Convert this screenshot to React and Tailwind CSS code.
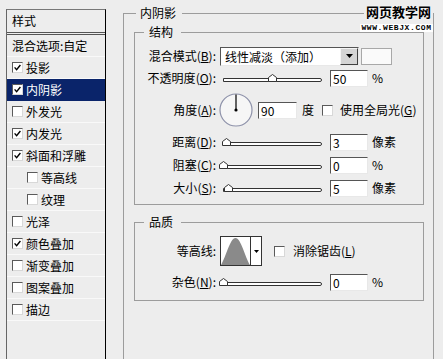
import React from "react";

const items = [
  { label: "投影", checked: true },
  { label: "内阴影", checked: true, active: true },
  { label: "外发光" },
  { label: "内发光", checked: true },
  { label: "斜面和浮雕", checked: true },
  { label: "等高线", indent: true },
  { label: "纹理", indent: true },
  { label: "光泽" },
  { label: "颜色叠加", checked: true },
  { label: "渐变叠加" },
  { label: "图案叠加" },
  { label: "描边" },
];

function Check({ checked }) {
  return (
    <span className="w-[11px] h-[11px] shrink-0 flex items-center justify-center bg-white border border-t-[#5a5a5a] border-l-[#5a5a5a] border-b-[#d8d8d8] border-r-[#d8d8d8]">
      {checked && (
        <svg width="7" height="7" viewBox="0 0 7 7">
          <path d="M0.6 3.4 L2.6 5.6 L6.4 1" stroke="#000" strokeWidth="1.4" fill="none" />
        </svg>
      )}
    </span>
  );
}

function Label({ children }) {
  return <span className="w-[81px] shrink-0 text-right whitespace-nowrap">{children}</span>;
}

function Key({ k }) {
  return (
    <>
      (<span className="underline underline-offset-[1px]">{k}</span>)
    </>
  );
}

function Slider({ thumb }) {
  return (
    <div className="relative ml-[3px] w-[103px] h-[8px] flex items-end shrink-0">
      <div className="ml-[4px] w-[99px] h-[4px] bg-white border border-[#333] rounded-r-[2px]" />
      <svg className={"absolute top-0 " + thumb} width="9" height="8" viewBox="0 0 9 8">
        <path d="M0.5 7.5 V3.5 L4.5 0.5 L8.5 3.5 V7.5 Z" fill="#fff" stroke="#333" />
      </svg>
    </div>
  );
}

function Field({ value, className = "w-[38px]" }) {
  return (
    <div className={"h-[17px] shrink-0 bg-white border border-t-[#555] border-l-[#555] border-b-[#e8e8e8] border-r-[#e8e8e8] pl-[2px] leading-[15px] " + className}>
      {value}
    </div>
  );
}

function SliderRow({ label, k, thumb, value, unit }) {
  return (
    <div className="h-[22px] flex items-center">
      <Label>
        {label}
        <Key k={k} />:
      </Label>
      <Slider thumb={thumb} />
      <Field value={value} className="w-[38px] ml-[8px]" />
      <span className="ml-[4px]">{unit}</span>
    </div>
  );
}

export default function App() {
  return (
    <div className="w-[443px] h-[359px] overflow-hidden bg-[#ededed] relative flex items-start text-[12px] text-black font-['Noto_Sans_CJK_SC',sans-serif]">
      {/* left list */}
      <div className="ml-[6px] mt-[9px] w-[100px] h-[360px] shrink-0 border-l border-t border-r border-l-[#666] border-t-[#777] border-r-black">
        <div className="h-[25px] pl-[5px] flex items-center border-b-[3px] border-double border-[#555]">样式</div>
        <div className="h-[22px] pl-[5px] flex items-center border-b border-[#f9f9f9]">混合选项:自定</div>
        {items.map((it) => (
          <div
            key={it.label}
            className={
              "h-[22px] flex items-center gap-[3px] border-b " +
              (it.indent ? "pl-[20px] " : "pl-[5px] ") +
              (it.active ? "bg-[#0a246a] text-white border-[#0a246a]" : "border-[#f9f9f9]")
            }
          >
            <Check checked={it.checked} />
            <span>{it.label}</span>
          </div>
        ))}
      </div>

      {/* right panel */}
      <fieldset className="ml-[17px] mt-[5px] w-[311px] h-[370px] shrink-0 border border-[#9c9c9c]">
        <legend className="ml-[12px] pl-[4px] pr-[6px] leading-[16px]">内阴影</legend>

        <fieldset className="mt-[3px] ml-[10px] mr-[9px] border border-[#9c9c9c] pt-[5px] pb-[5px]">
          <legend className="ml-[9px] pl-[5px] pr-[8px] leading-[16px]">结构</legend>

          <div className="h-[22px] flex items-center">
            <Label>
              混合模式<Key k="B" />:
            </Label>
            <div className="ml-[4px] w-[139px] h-[19px] flex bg-white border border-t-[#555] border-l-[#555] border-b-[#e8e8e8] border-r-[#e8e8e8]">
              <span className="flex-1 pl-[4px] leading-[17px] whitespace-nowrap">线性减淡（添加）</span>
              <span className="w-[18px] h-full flex items-center justify-center bg-[#d4d4d4] border border-t-[#f4f4f4] border-l-[#f4f4f4] border-b-[#404040] border-r-[#404040]">
                <svg width="7" height="4" viewBox="0 0 7 4">
                  <path d="M0 0 H7 L3.5 4 Z" fill="#000" />
                </svg>
              </span>
            </div>
            <div className="ml-[2px] w-[31px] h-[17px] bg-[#fafafa] border border-[#a8a8a8]" />
          </div>

          <SliderRow label="不透明度" k="O" thumb="left-[49px]" value="50" unit="%" />

          <div className="mt-[4px] h-[34px] flex items-center">
            <Label>
              角度<Key k="A" />:
            </Label>
            <svg className="ml-[3px] shrink-0" width="34" height="34" viewBox="0 0 34 34">
              <circle cx="17" cy="17" r="16" fill="#f6f6f6" stroke="#8e92aa" strokeWidth="1.2" />
              <line x1="17" y1="17" x2="17" y2="1.5" stroke="#000" strokeWidth="1.2" />
              <circle cx="17" cy="17" r="1.6" fill="#000" />
            </svg>
            <Field value="90" className="w-[39px] ml-[5px]" />
            <span className="ml-[5px]">度</span>
            <span className="ml-[8px]">
              <Check />
            </span>
            <span className="ml-[7px] whitespace-nowrap">
              使用全局光<Key k="G" />
            </span>
          </div>

          <div className="mt-[4px] flex flex-col gap-[1px]">
            <SliderRow label="距离" k="D" thumb="left-[3px]" value="3" unit="像素" />
            <SliderRow label="阻塞" k="C" thumb="left-[0px]" value="0" unit="%" />
            <SliderRow label="大小" k="S" thumb="left-[5px]" value="5" unit="像素" />
          </div>
        </fieldset>

        <fieldset className="mt-[9px] ml-[10px] mr-[9px] border border-[#9c9c9c] pt-[6px] pb-[7px]">
          <legend className="ml-[9px] pl-[5px] pr-[8px] leading-[16px]">品质</legend>

          <div className="h-[30px] flex items-center">
            <Label>等高线:</Label>
            <div className="ml-[4px] w-[42px] h-[30px] flex bg-white border border-[#333]">
              <svg width="29" height="28" viewBox="0 0 29 28" className="shrink-0">
                <path d="M0 28 C5 20 9 1 14.5 1 C20 1 24 20 29 28 Z" fill="#8a8a8a" />
              </svg>
              <span className="flex-1 border-l border-[#333] flex items-center justify-center">
                <svg width="5" height="3" viewBox="0 0 5 3">
                  <path d="M0 0 H5 L2.5 3 Z" fill="#000" />
                </svg>
              </span>
            </div>
            <span className="ml-[12px]">
              <Check />
            </span>
            <span className="ml-[8px] whitespace-nowrap">
              消除锯齿<Key k="L" />
            </span>
          </div>

          <div className="mt-[5px]">
            <SliderRow label="杂色" k="N" thumb="left-[0px]" value="0" unit="%" />
          </div>
        </fieldset>
      </fieldset>

      {/* watermark */}
      <div className="absolute left-[360px] top-[3px] w-[73px] flex flex-col items-end">
        <span className="px-[2px] bg-[#ededed] text-[13px] leading-[18px] font-bold [text-shadow:0_0_2px_#fff]">网页教学网</span>
        <span className="mt-[3px] w-[73px] h-[8px] bg-white text-center text-[8px] leading-[8px] font-bold font-['Liberation_Mono',monospace] tracking-[0.6px]">
          WWW.WEBJX.COM
        </span>
      </div>
    </div>
  );
}
